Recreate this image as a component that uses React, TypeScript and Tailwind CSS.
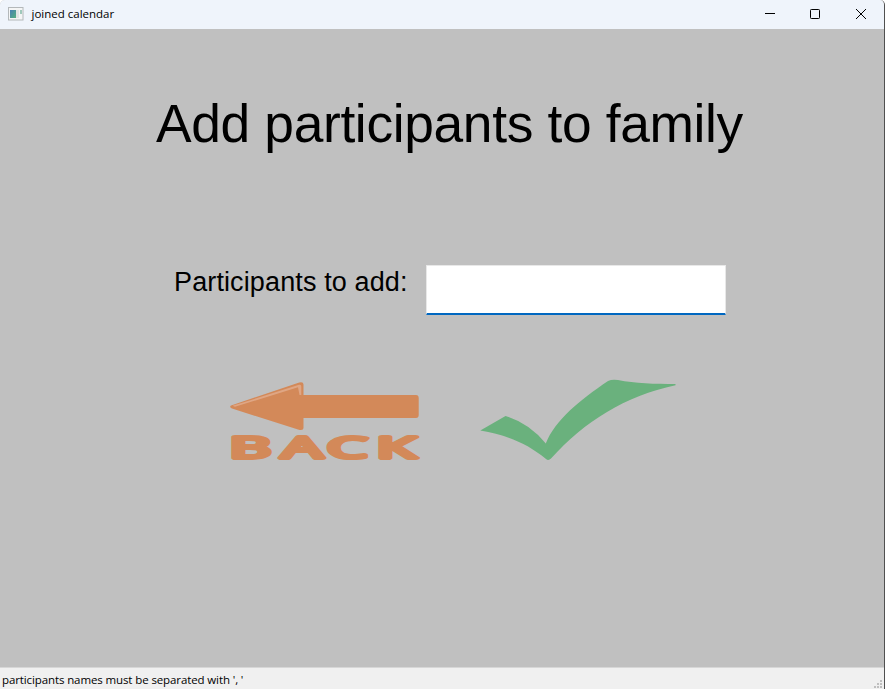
function TitleBar() {
  return (
    <header className="flex h-[29px] shrink-0 items-center bg-[#eff4fb] pb-[2px]">
      <svg className="ml-2 block" width="16" height="14" viewBox="0 0 16 14">
        <defs>
          <linearGradient id="pane" x1="0" y1="0" x2="1" y2="1">
            <stop offset="0" stopColor="#4a80b4" />
            <stop offset="1" stopColor="#56b07e" />
          </linearGradient>
        </defs>
        <rect x=".5" y=".5" width="14.500" height="12.500" fill="#f4f5f5" stroke="#b4b8ba" />
        <rect x="2" y="3" width="6" height="8" fill="url(#pane)" />
        <rect x="8" y="3" width="3" height="8" fill="#e2e4e4" />
        <rect x="12" y="3" width="2" height="4" fill="#9fc9bb" />
      </svg>
      <span className="ml-[7.500px] whitespace-nowrap font-['Open_Sans','Noto_Sans',sans-serif] text-[11.5px] leading-4 text-black">
        joined calendar
      </span>
      <div className="ml-auto flex h-full items-center text-black">
        <button aria-label="Minimize" className="flex h-full w-[45px] items-center justify-center">
          <svg width="10" height="10" viewBox="0 0 10 10" shapeRendering="crispEdges"><path d="M0 4.500H10" stroke="currentColor" /></svg>
        </button>
        <button aria-label="Maximize" className="flex h-full w-[45px] items-center justify-center">
          <svg width="10" height="10" viewBox="0 0 10 10"><rect x=".5" y=".5" width="9" height="9" rx=".8" fill="none" stroke="currentColor" /></svg>
        </button>
        <button aria-label="Close" className="flex h-full w-[47px] items-center justify-center">
          <svg width="10" height="10" viewBox="0 0 10 10"><path d="M0 0L10 10M10 0L0 10" stroke="currentColor" /></svg>
        </button>
      </div>
    </header>
  );
}

function BackImage() {
  return (
    <svg className="block overflow-visible" width="200" height="90" viewBox="226 375 200 90">
      <path
        d="M231 405.500L297 383.200Q303.500 381 303.500 384.500V395H416Q418.700 395 418.700 398V415Q418.700 418 416 418H303.500V428Q303.500 431 298 429.500L232 408.500Q229 407 231 405.500Z"
        fill="#d38959"
      />
      <path d="M232.500 405.800L299 384.800Q301.500 384 301.300 387V395H299.500L298 387.300L235 406.800Z" fill="#dfa684" />
      <text
        transform="translate(231 458.200) scale(2.250 1)"
        x="-0.700 22.600 42.700 64.700"
        fontFamily="'Open Sans', 'Liberation Sans', sans-serif"
        fontWeight="500"
        fontSize="28.500"
        fill="#d38959"
        stroke="#d38959"
        strokeWidth="3.900"
        strokeLinejoin="round"
      >
        BACK
      </text>
    </svg>
  );
}

function CheckImage() {
  return (
    <svg className="block" width="200" height="90" viewBox="478 375 200 90">
      <path
        d="M480.300 430.500L505.500 416Q529 423 545.800 443.500C555 420 580 400 608 381Q612 379 618 380C635 383.500 655 384 675.500 384V385.200C625 396 585 421 551 458.500Q548.500 461 546 459C528 444 507 435 480.300 430.500Z"
        fill="#6ab17d"
      />
    </svg>
  );
}

export default function App() {
  return (
    <div className="flex h-[689px] w-[885px] overflow-hidden rounded-t-[5px] border-r border-[#505050] bg-[#c0c0c0]">
      <div className="flex min-w-0 flex-1 flex-col">
        <TitleBar />
        <main className="flex flex-1 flex-col bg-[#c0c0c0] font-['Liberation_Sans',Arial,sans-serif] text-black">
          <h1 className="ml-[156px] mt-[65px] whitespace-nowrap text-[53.33px] leading-[60px] tracking-[-0.34px]">
            Add participants to family
          </h1>
          <div className="ml-[174px] mt-[111px] flex items-start">
            <label htmlFor="names" className="w-[252px] whitespace-nowrap pt-px text-[27px] leading-8 tracking-[0.12px]">
              Participants to add:
            </label>
            <input
              id="names"
              className="h-[50px] w-[300px] rounded-[1px] border border-b-2 border-[#e8e8e8] border-b-[#0067c0] bg-white px-2 text-[26px] outline-none"
            />
          </div>
          <div className="ml-[226px] mt-[60px] flex gap-[52px]">
            <button aria-label="Back"><BackImage /></button>
            <button aria-label="Confirm"><CheckImage /></button>
          </div>
        </main>
        <footer className="flex h-[22px] shrink-0 items-end justify-between border-t border-[#d7d7d7] bg-[#f0f0f0]">
          <span className="ml-[2px] whitespace-nowrap font-['Open_Sans','Noto_Sans',sans-serif] text-[11.5px] leading-[18px] tracking-[-0.11px] text-black">
            {"participants names must be separated with ', '"}
          </span>
          <svg width="12" height="11" viewBox="0 0 12 11" fill="#bfbfbf">
            <path d="M8 2h2v2H8zM5 5h2v2H5zM8 5h2v2H8zM2 8h2v2H2zM5 8h2v2H5zM8 8h2v2H8z" />
          </svg>
        </footer>
      </div>
    </div>
  );
}
